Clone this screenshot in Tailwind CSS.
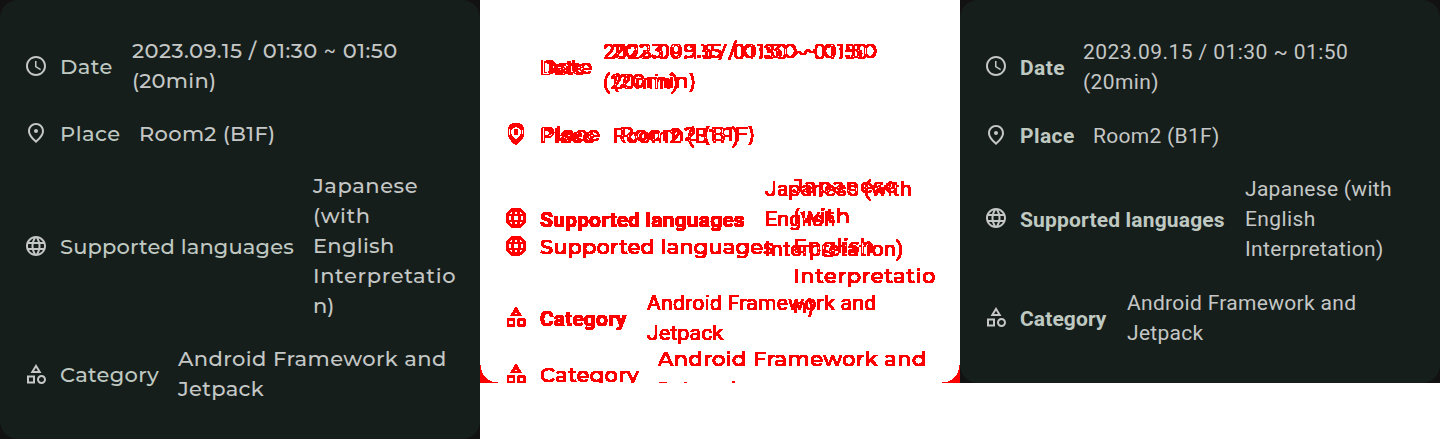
<!DOCTYPE html>
<html lang="en">
<head>
<meta charset="utf-8">
<title>Session info comparison</title>
<script src="https://cdn.jsdelivr.net/npm/@tailwindcss/browser@4"></script>
</head>
<body class="bg-white overflow-hidden">
<svg class="absolute w-0 h-0" aria-hidden="true">
  <!-- turns every changed pixel red and every unchanged one white -->
  <filter id="changed" color-interpolation-filters="sRGB" x="0" y="0" width="1" height="1">
    <feColorMatrix type="matrix" values="0 0 0 0 1  -250 -250 -250 0 3  -250 -250 -250 0 3  0 0 0 0 1"/>
  </filter>
  <symbol id="clock" viewBox="0 0 24 24"><path d="M11.99 2C6.47 2 2 6.48 2 12s4.47 10 9.99 10C17.52 22 22 17.52 22 12S17.52 2 11.99 2zM12 20c-4.42 0-8-3.58-8-8s3.58-8 8-8 8 3.58 8 8-3.58 8-8 8zm.5-13H11v6l5.25 3.15.75-1.23-4.5-2.67z"/></symbol>
  <symbol id="place" viewBox="0 0 24 24"><path d="M12 12c-1.1 0-2-.9-2-2s.9-2 2-2 2 .9 2 2-.9 2-2 2zm6-1.8C18 6.57 15.35 4 12 4s-6 2.57-6 6.2c0 2.34 1.95 5.44 6 9.14 4.05-3.7 6-6.8 6-9.14zM12 2c4.2 0 8 3.22 8 8.2 0 3.32-2.67 7.25-8 11.8-5.33-4.55-8-8.48-8-11.8C4 5.22 7.8 2 12 2z"/></symbol>
  <symbol id="globe" viewBox="0 0 24 24"><path d="M11.99 2C6.47 2 2 6.48 2 12s4.47 10 9.99 10C17.52 22 22 17.52 22 12S17.52 2 11.99 2zm6.93 6h-2.95c-.32-1.25-.78-2.45-1.38-3.56 1.84.63 3.37 1.91 4.33 3.56zM12 4.04c.83 1.2 1.48 2.53 1.91 3.96h-3.82c.43-1.43 1.08-2.76 1.91-3.96zM4.26 14C4.1 13.36 4 12.69 4 12s.1-1.36.26-2h3.38c-.08.66-.14 1.32-.14 2s.06 1.34.14 2H4.26zm.82 2h2.95c.32 1.25.78 2.45 1.38 3.56-1.84-.63-3.37-1.9-4.33-3.56zm2.95-8H5.08c.96-1.66 2.49-2.93 4.33-3.56C8.81 5.55 8.35 6.75 8.03 8zM12 19.96c-.83-1.2-1.48-2.53-1.91-3.96h3.82c-.43 1.43-1.08 2.76-1.91 3.96zM14.34 14H9.66c-.09-.66-.16-1.32-.16-2s.07-1.35.16-2h4.68c.09.65.16 1.32.16 2s-.07 1.34-.16 2zm.25 5.56c.6-1.11 1.06-2.31 1.38-3.56h2.95c-.96 1.65-2.49 2.93-4.33 3.56zM16.36 14c.08-.66.14-1.32.14-2s-.06-1.34-.14-2h3.38c.16.64.26 1.31.26 2s-.1 1.36-.26 2h-3.38z"/></symbol>
  <symbol id="category" viewBox="0 0 24 24"><path d="M12 2l-5.5 9h11L12 2zm0 3.84L13.93 9h-3.87L12 5.84zM17.5 13c-2.49 0-4.5 2.01-4.5 4.5s2.01 4.5 4.5 4.5 4.5-2.01 4.5-4.5-2.01-4.5-4.5-4.5zm0 7c-1.38 0-2.5-1.12-2.5-2.5s1.12-2.5 2.5-2.5 2.5 1.12 2.5 2.5-1.12 2.5-2.5 2.5zM3 21.5h8v-8H3v8zm2-6h4v4H5v-4z"/></symbol>
</svg>

<main class="flex items-start w-[1440px] h-[439px]">
  <section id="before" class="w-[480px] h-[439px] shrink-0 bg-[#121212]">
    <div class="h-[438.5px] rounded-[18px] bg-[#161e1c] pl-6 pt-9 flex flex-col font-[Montserrat,Inter,sans-serif] font-medium text-[21px] leading-[30px] text-[#c4c7c5] whitespace-nowrap">
      <div class="flex items-center h-[60px] shrink-0">
        <svg class="size-6 fill-current mr-3"><use href="#clock"/></svg>
        <div class="w-[72px] tracking-[0.43px] text-[#bfc9c1] pt-px">Date</div>
        <div><div class="tracking-[0.49px]">2023.09.15 / 01:30 ~ 01:50</div><div class="tracking-[0.25px]">(20min)</div></div>
      </div>
      <div class="flex items-center h-[30px] shrink-0 mt-[22px]">
        <svg class="size-6 fill-current mr-3"><use href="#place"/></svg>
        <div class="w-[79px] tracking-[0.48px] text-[#bfc9c1] pt-px">Place</div>
        <div class="tracking-[0.33px] pt-px">Room2 (B1F)</div>
      </div>
      <div class="flex items-center h-[150px] shrink-0 mt-[23px]">
        <svg class="size-6 fill-current mr-3"><use href="#globe"/></svg>
        <div class="w-[253px] tracking-[0.14px] text-[#bfc9c1] pt-px">Supported languages</div>
        <div><div class="tracking-[0.55px]">Japanese</div><div class="tracking-[0.55px]">(with</div><div class="tracking-[0.3px]">English</div><div class="tracking-[0.65px]">Interpretatio</div><div>n)</div></div>
      </div>
      <div class="flex items-center h-[60px] shrink-0 mt-[23px]">
        <svg class="size-6 fill-current mr-3"><use href="#category"/></svg>
        <div class="w-[118px] tracking-[0.3px] text-[#bfc9c1] pt-px">Category</div>
        <div><div class="tracking-[0.42px]">Android Framework and</div><div class="tracking-[0.3px]">Jetpack</div></div>
      </div>
    </div>
  </section>

  <section id="diff" class="w-[480px] h-[383px] shrink-0 overflow-hidden isolate grid bg-black [filter:url(#changed)]"></section>

  <section id="after" class="w-[480px] h-[383px] shrink-0 bg-[#121212]">
    <div class="h-[382.5px] rounded-[18px] bg-[#161e1c] pl-6 pt-9 flex flex-col font-[Roboto,sans-serif] text-[21px] leading-[30px] text-[#c4c7c5] whitespace-nowrap">
      <div class="flex items-center h-[60px] shrink-0">
        <svg class="size-6 fill-current mr-3"><use href="#clock"/></svg>
        <div class="w-[63px] tracking-[0.4px] text-[#bfc9c1] font-bold pt-[3px]">Date</div>
        <div class="pt-[2px]"><div class="tracking-[0.44px]">2023.09.15 / 01:30 ~ 01:50</div><div class="tracking-[0.4px]">(20min)</div></div>
      </div>
      <div class="flex items-center h-[33px] shrink-0 mt-[22.5px]">
        <svg class="size-6 fill-current mr-3"><use href="#place"/></svg>
        <div class="w-[73px] tracking-[0.43px] text-[#bfc9c1] font-bold pt-[2px]">Place</div>
        <div class="tracking-[0.3px] pt-[2px]">Room2 (B1F)</div>
      </div>
      <div class="flex items-center h-[90px] shrink-0 mt-[21.5px]">
        <svg class="size-6 fill-current mr-3"><use href="#globe"/></svg>
        <div class="w-[225px] tracking-[0.17px] text-[#bfc9c1] font-bold pt-[3px]">Supported languages</div>
        <div class="pt-[2px]"><div class="tracking-[0.3px]">Japanese (with</div><div class="tracking-[0.39px]">English</div><div class="tracking-[0.35px]">Interpretation)</div></div>
      </div>
      <div class="flex items-center h-[60px] shrink-0 mt-[24px]">
        <svg class="size-6 fill-current mr-3"><use href="#category"/></svg>
        <div class="w-[107px] tracking-[0.1px] text-[#bfc9c1] font-bold pt-[3px]">Category</div>
        <div class="pt-[2px]"><div class="tracking-[0.31px]">Android Framework and</div><div class="tracking-[0.3px]">Jetpack</div></div>
      </div>
    </div>
  </section>
</main>
<script>
  // The middle panel stacks both versions and blends them by difference.
  const diff = document.getElementById('diff');
  for (const id of ['before', 'after']) {
    const layer = document.getElementById(id).cloneNode(true);
    layer.removeAttribute('id');
    layer.classList.add('col-start-1', 'row-start-1', 'mix-blend-difference');
    diff.append(layer);
  }
</script>
</body>
</html>
